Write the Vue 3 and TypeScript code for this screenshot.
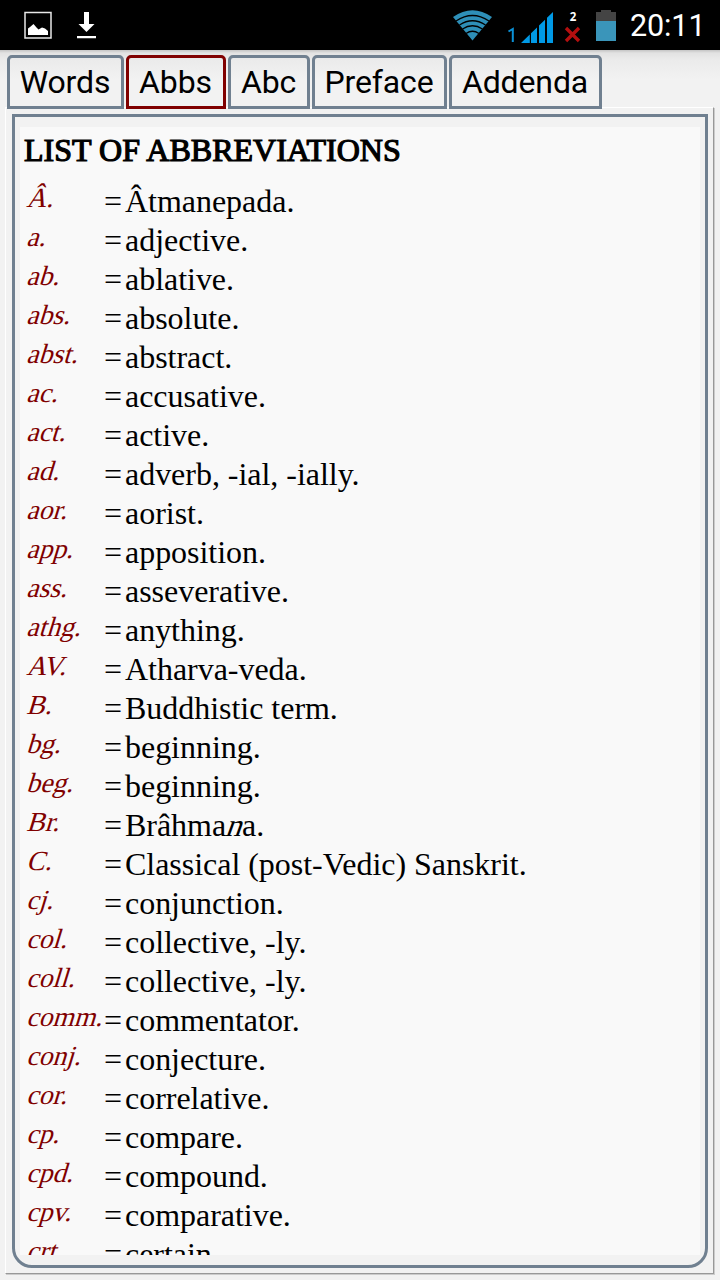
<script setup lang="ts">
import { ref } from 'vue'

interface Entry {
  abbr: string
  parts: string[] // odd indexes are set slanted
}

const tabs: { label: string; width: number }[] = [
  { label: 'Words', width: 117 },
  { label: 'Abbs', width: 100 },
  { label: 'Abc', width: 82 },
  { label: 'Preface', width: 135 },
  { label: 'Addenda', width: 153 },
]
const active = ref('Abbs')

const source: [string, string][] = [
  ['Â.', 'Âtmanepada.'],
  ['a.', 'adjective.'],
  ['ab.', 'ablative.'],
  ['abs.', 'absolute.'],
  ['abst.', 'abstract.'],
  ['ac.', 'accusative.'],
  ['act.', 'active.'],
  ['ad.', 'adverb, -ial, -ially.'],
  ['aor.', 'aorist.'],
  ['app.', 'apposition.'],
  ['ass.', 'asseverative.'],
  ['athg.', 'anything.'],
  ['AV.', 'Atharva-veda.'],
  ['B.', 'Buddhistic term.'],
  ['bg.', 'beginning.'],
  ['beg.', 'beginning.'],
  ['Br.', 'Brâhma*n*a.'],
  ['C.', 'Classical (post-Vedic) Sanskrit.'],
  ['cj.', 'conjunction.'],
  ['col.', 'collective, -ly.'],
  ['coll.', 'collective, -ly.'],
  ['comm.', 'commentator.'],
  ['conj.', 'conjecture.'],
  ['cor.', 'correlative.'],
  ['cp.', 'compare.'],
  ['cpd.', 'compound.'],
  ['cpv.', 'comparative.'],
  ['crt.', 'certain.'],
]
const entries: Entry[] = source.map(([abbr, text]) => ({ abbr, parts: text.split('*') }))
</script>

<template>
  <div class="screen">
    <header class="status">
      <svg class="notif" width="120" height="50" viewBox="0 0 120 50">
        <rect x="25" y="12.500" width="26" height="25.500" fill="none" stroke="#e8e8e8" stroke-width="1.500" />
        <path d="M28 35V28.500L30 27L33.500 24L36.500 27.500L38.500 29.500L42 27.500L45 28.500L48 31V35Z" fill="#fff" />
        <path d="M84 12H89V24H94.500L86.500 32L78.500 24H84ZM77 36H96V38.300H77Z" fill="#fff" />
      </svg>
      <div class="right">
        <svg width="180" height="50" viewBox="450 0 180 50">
          <path d="M453 17Q472.500 3.500 492 17L472.500 40.500Z" fill="#2e8fb8" />
          <g fill="none" stroke="#000" stroke-width="1.300">
            <path d="M456 21Q472.500 10 489 21" />
            <path d="M459.500 25Q472.500 16.500 485.500 25" />
            <path d="M462.500 29Q472.500 22.500 482.500 29" />
            <path d="M466 33.500Q472.500 29 479 33.500" />
          </g>
          <path d="M508.500 31.500L512.800 29V42" fill="none" stroke="#0b91d6" stroke-width="2" />
          <path d="M521 43L529.800 34.500V43ZM531 43V33.300L537 27.500V43ZM539 43V25.500L545 19.700V43ZM547 43V17.800L553 12V43Z" fill="#0099e5" />
          <text x="569.800" y="21" class="sim">2</text>
          <path d="M566 28L579 41M579 28L566 41" stroke="#b30f0f" stroke-width="3.400" />
          <path d="M596 12H601V10H611V12H616V21H596Z" fill="#444" />
          <rect x="596" y="21" width="20" height="20" fill="#3a95ba" />
        </svg>
        <span class="clock">20:11</span>
      </div>
    </header>
    <main class="body">
      <nav class="tabs">
        <button
          v-for="t in tabs"
          :key="t.label"
          class="tab"
          :class="{ on: active === t.label }"
          :style="{ width: t.width + 'px' }"
          @click="active = t.label"
        >{{ t.label }}</button>
      </nav>
      <section class="panel">
        <div class="frame">
          <div class="content">
            <h1>LIST OF ABBREVIATIONS</h1>
            <div v-for="(e, i) in entries" :key="i" class="row">
              <span class="abbr">{{ e.abbr }}</span>
              <span class="eq">=</span>
              <span class="def"><template v-for="(p, j) in e.parts" :key="j"><i v-if="j % 2">{{ p }}</i><template v-else>{{ p }}</template></template></span>
            </div>
          </div>
        </div>
      </section>
    </main>
  </div>
</template>

<style>
body {
  margin: 0;
}
</style>

<style scoped>
.screen {
  width: 720px;
  height: 1280px;
  display: flex;
  flex-direction: column;
  overflow: hidden;
  background: #f2f2f2;
}
.status {
  flex: none;
  height: 50px;
  background: #000;
  display: flex;
  justify-content: space-between;
}
.status svg {
  display: block;
}
.right {
  display: flex;
}
.clock {
  width: 90px;
  font: 30.500px/52px Roboto, sans-serif;
  letter-spacing: -0.100px;
  color: #fff;
  white-space: nowrap;
}
.sim {
  font: bold 11.500px "Open Sans", sans-serif;
  fill: #fff;
}
.body {
  flex: 1;
  display: flex;
  flex-direction: column;
  min-height: 0;
  padding: 5px;
  background: linear-gradient(#c4c4c4 0, #e2e2e2 3px, #ebebeb 10px, #f2f2f2 30px);
}
.tabs {
  display: flex;
  gap: 2px;
  padding-left: 2px;
  margin-bottom: -2px;
  position: relative;
  z-index: 1;
}
.tab {
  box-sizing: border-box;
  height: 54px;
  padding: 0 1px 0 0;
  border: 3px solid #708090;
  border-radius: 5px 5px 0 0;
  background: transparent;
  font: 32px/48px Roboto, sans-serif;
  letter-spacing: -0.120px;
  color: #000;
  white-space: nowrap;
}
.tab.on {
  border-color: #800000;
}
.panel {
  flex: 1;
  min-height: 0;
  display: flex;
  box-sizing: border-box;
  border-style: solid;
  border-width: 1px;
  border-color: #fff #999 #999 #fff;
  box-shadow: 1px 1px 0 #ccc;
  padding: 6px 5px 5px 6px;
  margin-right: 1px;
  margin-bottom: 1px;
}
.frame {
  flex: 1;
  min-width: 0;
  display: flex;
  border: 3px solid #708090;
  border-radius: 0 0 20px 20px;
  padding: 10px 5px;
  background: #f2f2f2;
}
.content {
  flex: 1;
  overflow: hidden;
  background: #f9f9f9;
  padding-left: 4px;
  font-family: "Liberation Serif", serif;
  font-size: 32px;
  color: #000;
}
h1 {
  margin: 0;
  padding-top: 4px;
  height: 51px;
  font-size: 32px;
  line-height: 39px;
  font-weight: 400;
  letter-spacing: 0.020px;
  -webkit-text-stroke: 1.200px #000;
  white-space: nowrap;
}
.row {
  display: flex;
  height: 39px;
  line-height: 39px;
  padding-left: 2px;
  white-space: nowrap;
}
.abbr {
  flex: none;
  width: 78px;
  height: 29px;
  line-height: 31px;
  font-size: 27.600px;
  color: #800000;
  transform: skewX(-17deg);
  transform-origin: 0 25px;
}
.eq {
  flex: none;
  width: 21px;
}
.def {
  letter-spacing: -0.030px;
}
.def i {
  display: inline-block;
  font-style: normal;
  transform: skewX(-20deg);
  transform-origin: 0 26px;
}
</style>
